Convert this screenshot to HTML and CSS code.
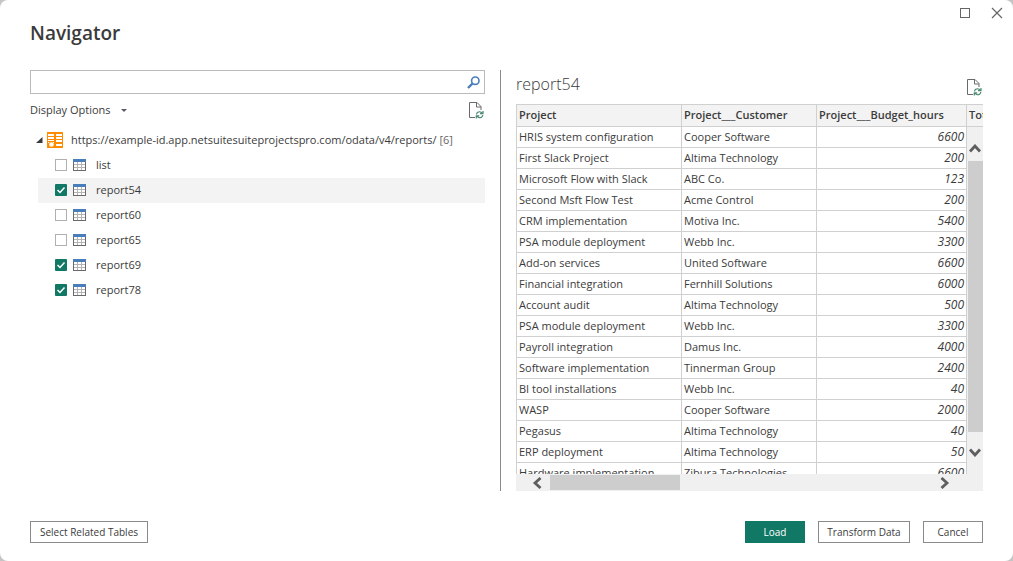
FILE: index.html
```html
<!DOCTYPE html>
<html lang="en">
<head>
    <meta charset="UTF-8">
    <meta name="viewport" content="width=device-width, initial-scale=1.0">
    <title>Navigator</title>
    <link rel="stylesheet" href="styles.css">
</head>
<body>
    <!-- Shared icons -->
    <svg class="icon-defs" width="0" height="0" aria-hidden="true">
        <symbol id="icon-table" viewBox="0 0 13 12">
            <rect x="0" y="0" width="13" height="12" fill="#6a6a6a"/>
            <rect x="1" y="3" width="11" height="8" fill="#b4b4b4"/>
            <path fill="#fff" d="M1 3h3v2H1zM5 3h3v2H5zM9 3h3v2H9zM1 6h3v2H1zM5 6h3v2H5zM9 6h3v2H9zM1 9h3v2H1zM5 9h3v2H5zM9 9h3v2H9z"/>
            <rect x="0" y="0" width="13" height="3" fill="#4a7ebb"/>
        </symbol>
        <symbol id="icon-refresh" viewBox="0 0 15 17">
            <path d="M6 15.5H.5V.5h7.500l4 4V8M7.500.5v4.500H12" fill="none" stroke="#6a6a6a"/>
            <path d="M7.500 12.500c.3-2 2-3 3.500-2.700 1 .1 1.700.6 2.200 1.400M14 9v2.700h-3M13.800 13c-.3 2-2 3-3.500 2.700-1-.1-1.700-.6-2.200-1.400M7.300 16.500v-2.700h3" fill="none" stroke="#4c8a72" stroke-width="1.200"/>
        </symbol>
    </svg>

    <div class="dialog">
        <header class="titlebar">
            <h1>Navigator</h1>
            <div class="window-controls">
                <button type="button" aria-label="Maximize">
                    <svg width="12" height="12" viewBox="0 0 12 12"><rect x="1.500" y="1.500" width="9" height="9" fill="none" stroke="#666"/></svg>
                </button>
                <button type="button" aria-label="Close">
                    <svg width="12" height="12" viewBox="0 0 12 12"><path d="M1 1l10 10M11 1L1 11" stroke="#666" stroke-width="1.200"/></svg>
                </button>
            </div>
        </header>

        <main class="content">
            <section class="sources">
                <div class="search">
                    <input type="text" aria-label="Search">
                    <button type="button" aria-label="Search">
                        <svg width="13" height="13" viewBox="0 0 13 13"><circle cx="8.300" cy="4.700" r="3.700" fill="none" stroke="#4a7ebb" stroke-width="1.600"/><path d="M5.500 7.500L1 12" stroke="#4a7ebb" stroke-width="2.400"/></svg>
                    </button>
                </div>
                <div class="toolbar">
                    <button type="button" class="display-options">Display Options
                        <svg width="6" height="3" viewBox="0 0 6 3"><path d="M0 0h6L3 3z" fill="#5a5a66"/></svg>
                    </button>
                    <button type="button" class="refresh" aria-label="Refresh">
                        <svg width="15" height="17"><use href="#icon-refresh"/></svg>
                    </button>
                </div>
                <div class="root">
                    <svg width="7" height="6" viewBox="0 0 7 6"><path d="M6.500 0v6H0z" fill="#3b3b3b"/></svg>
                    <svg width="16" height="16" viewBox="0 0 16 16">
                        <rect width="16" height="16" fill="#ff8c00"/>
                        <path fill="#fff" d="M1 2h6v2H1zM9 2h6v2H9zM1 5h6v2H1zM9 5h6v2H9zM1 8h6v1H1zM9 8h6v2H9zM9 12h6v2H9zM1 10h1v1H1zM6 10h1v1H6z"/>
                        <circle cx="4.500" cy="12.500" r="2.300" fill="#fff"/>
                    </svg>
                    <span>https://example-id.app.netsuitesuiteprojectspro.com/odata/v4/reports/ <span class="count">[6]</span></span>
                </div>
                <ul class="tree">
                    <li><label><input type="checkbox"><svg width="13" height="12"><use href="#icon-table"/></svg>list</label></li>
                    <li class="selected"><label><input type="checkbox" checked><svg width="13" height="12"><use href="#icon-table"/></svg>report54</label></li>
                    <li><label><input type="checkbox"><svg width="13" height="12"><use href="#icon-table"/></svg>report60</label></li>
                    <li><label><input type="checkbox"><svg width="13" height="12"><use href="#icon-table"/></svg>report65</label></li>
                    <li><label><input type="checkbox" checked><svg width="13" height="12"><use href="#icon-table"/></svg>report69</label></li>
                    <li><label><input type="checkbox" checked><svg width="13" height="12"><use href="#icon-table"/></svg>report78</label></li>
                </ul>
            </section>

            <section class="preview">
                <div class="preview-header">
                    <h2>report54</h2>
                    <button type="button" class="refresh" aria-label="Refresh preview">
                        <svg width="15" height="17"><use href="#icon-refresh"/></svg>
                    </button>
                </div>
                <div class="grid">
                    <div class="grid-view">
                        <table>
                            <thead>
                                <tr><th class="col-project">Project</th><th class="col-customer">Project___Customer</th><th class="col-hours">Project___Budget_hours</th><th class="col-total">Total</th></tr>
                            </thead>
                            <tbody>
                                <tr><td>HRIS system configuration</td><td>Cooper Software</td><td class="num">6600</td><td></td></tr>
                                <tr><td>First Slack Project</td><td>Altima Technology</td><td class="num">200</td><td></td></tr>
                                <tr><td>Microsoft Flow with Slack</td><td>ABC Co.</td><td class="num">123</td><td></td></tr>
                                <tr><td>Second Msft Flow Test</td><td>Acme Control</td><td class="num">200</td><td></td></tr>
                                <tr><td>CRM implementation</td><td>Motiva Inc.</td><td class="num">5400</td><td></td></tr>
                                <tr><td>PSA module deployment</td><td>Webb Inc.</td><td class="num">3300</td><td></td></tr>
                                <tr><td>Add-on services</td><td>United Software</td><td class="num">6600</td><td></td></tr>
                                <tr><td>Financial integration</td><td>Fernhill Solutions</td><td class="num">6000</td><td></td></tr>
                                <tr><td>Account audit</td><td>Altima Technology</td><td class="num">500</td><td></td></tr>
                                <tr><td>PSA module deployment</td><td>Webb Inc.</td><td class="num">3300</td><td></td></tr>
                                <tr><td>Payroll integration</td><td>Damus Inc.</td><td class="num">4000</td><td></td></tr>
                                <tr><td>Software implementation</td><td>Tinnerman Group</td><td class="num">2400</td><td></td></tr>
                                <tr><td>BI tool installations</td><td>Webb Inc.</td><td class="num">40</td><td></td></tr>
                                <tr><td>WASP</td><td>Cooper Software</td><td class="num">2000</td><td></td></tr>
                                <tr><td>Pegasus</td><td>Altima Technology</td><td class="num">40</td><td></td></tr>
                                <tr><td>ERP deployment</td><td>Altima Technology</td><td class="num">50</td><td></td></tr>
                                <tr><td>Hardware implementation</td><td>Zibura Technologies</td><td class="num">6600</td><td></td></tr>
                            </tbody>
                        </table>
                        <div class="scroll-y">
                            <svg width="12" height="9" viewBox="0 0 12 9"><path d="M1 7.500l5-5.500 5 5.500" fill="none" stroke="#5e5e5e" stroke-width="2.800"/></svg>
                            <div class="thumb"></div>
                            <svg width="12" height="9" viewBox="0 0 12 9"><path d="M1 1.500l5 5.500 5-5.500" fill="none" stroke="#5e5e5e" stroke-width="2.800"/></svg>
                        </div>
                    </div>
                    <div class="scroll-x">
                        <svg width="10" height="12" viewBox="0 0 10 12"><path d="M8.500 1l-5.500 5 5.500 5" fill="none" stroke="#5e5e5e" stroke-width="2.800"/></svg>
                        <div class="track"><div class="thumb"></div></div>
                        <svg width="10" height="12" viewBox="0 0 10 12"><path d="M1.500 1l5.500 5-5.500 5" fill="none" stroke="#5e5e5e" stroke-width="2.800"/></svg>
                    </div>
                </div>
            </section>
        </main>

        <footer class="actions">
            <button type="button" class="btn btn-related">Select Related Tables</button>
            <button type="button" class="btn btn-primary">Load</button>
            <button type="button" class="btn btn-transform">Transform Data</button>
            <button type="button" class="btn">Cancel</button>
        </footer>
    </div>
</body>
</html>
```
FILE: styles.css
```css
* {
    box-sizing: border-box;
}

body {
    margin: 0;
    background-color: #c4c4c4;
    color: #3b3b3b;
    font-family: "Open Sans", "Noto Sans", sans-serif;
    font-size: 11px;
    line-height: 16px;
}

button {
    padding: 0;
    border: none;
    background: none;
    color: inherit;
    font: inherit;
    cursor: pointer;
}

svg {
    display: block;
    flex: none;
}

.icon-defs {
    position: absolute;
}

.dialog {
    display: flex;
    flex-direction: column;
    height: 100vh;
    min-height: 400px;
    padding: 0 30px 18px;
    background-color: #fff;
    border-radius: 8px;
}

/* Title bar */
.titlebar {
    display: flex;
    justify-content: space-between;
    align-items: flex-start;
    height: 70px;
    margin-right: -20px;
}

h1 {
    margin: 20px 0 0;
    font-size: 19px;
    font-weight: 600;
    line-height: 26px;
}

.window-controls {
    display: flex;
    gap: 20px;
    padding-top: 7px;
}

/* Two panes split by a rule */
.content {
    display: flex;
    flex: 1;
    min-height: 0;
}

.sources {
    flex: 455 1 0;
    min-width: 0;
    margin-right: 15px;
}

.preview {
    display: flex;
    flex: 467 1 0;
    flex-direction: column;
    min-width: 0;
    padding-left: 15px;
    border-left: 1px solid #8a8a8a;
}

/* Source list */
.search {
    display: flex;
    align-items: center;
    height: 24px;
    padding-right: 4px;
    border: 1px solid #bababa;
}

.search input {
    flex: 1;
    min-width: 0;
    height: 22px;
    padding: 0 4px;
    border: none;
    outline: none;
    font: inherit;
}

.toolbar {
    display: flex;
    justify-content: space-between;
    align-items: center;
    height: 34px;
    padding: 0 1px 2px 0;
}

.display-options {
    display: flex;
    align-items: center;
    gap: 10px;
}

.root {
    display: flex;
    align-items: center;
    height: 25px;
    padding: 0 0 1px 6px;
    white-space: nowrap;
}

.root svg + svg {
    margin: 0 8px 0 4px;
}

.count {
    color: #666;
}

.tree {
    margin: 0;
    padding: 0 0 0 8px;
    list-style: none;
}

.tree label {
    display: flex;
    align-items: center;
    height: 25px;
    padding: 0 0 1px 17px;
}

.tree svg {
    margin: 0 10px 0 6px;
}

.tree .selected {
    background-color: #f3f3f3;
}

.tree input {
    appearance: none;
    width: 12px;
    height: 12px;
    margin: 0;
    border: 1px solid #b0b0b0;
    background-color: #fff;
}

.tree input:checked {
    border: none;
    border-radius: 1px;
    background: #117865 url("data:image/svg+xml,%3Csvg xmlns='http://www.w3.org/2000/svg' viewBox='0 0 12 12'%3E%3Cpath d='M2.500 6l2.500 2.500 4.500-5' fill='none' stroke='white' stroke-width='1.500'/%3E%3C/svg%3E") center / 12px 12px no-repeat;
}

/* Preview */
.preview-header {
    display: flex;
    justify-content: space-between;
    align-items: flex-end;
    height: 34px;
    padding: 0 1px 8px 0;
}

h2 {
    margin: 0;
    font-size: 16px;
    font-weight: 300;
    line-height: 24px;
}

.grid {
    display: flex;
    flex: 1;
    flex-direction: column;
    min-height: 0;
}

.grid-view {
    position: relative;
    flex: 1;
    min-height: 0;
    overflow: hidden;
}

table {
    width: 601px;
    border-collapse: separate;
    border-spacing: 0;
    border-top: 1px solid #d0d0d0;
    border-left: 1px solid #d0d0d0;
    table-layout: fixed;
}

th,
td {
    height: 21px;
    padding: 0 2px;
    border-right: 1px solid #d0d0d0;
    border-bottom: 1px solid #d0d0d0;
    text-align: left;
    white-space: nowrap;
}

th {
    height: 22px;
    padding-bottom: 2px;
    background-color: #f3f3f3;
    font-weight: 600;
}

.col-project {
    width: 165px;
}

.col-customer {
    width: 135px;
}

.col-hours {
    width: 150px;
}

.num {
    font-size: 12px;
    font-style: italic;
    text-align: right;
}

/* Scroll bars */
.scroll-y {
    position: absolute;
    top: 23px;
    right: 0;
    bottom: 0;
    display: flex;
    flex-direction: column;
    align-items: center;
    gap: 8px;
    width: 16px;
    padding: 17px 0;
    background-color: #f0f0f0;
}

.thumb {
    background-color: #cdcdcd;
}

.scroll-y .thumb {
    flex: 1;
    width: 15px;
    margin-bottom: 8px;
}

.scroll-x {
    display: flex;
    align-items: center;
    gap: 8px;
    height: 17px;
    padding: 0 33px 0 16px;
    background-color: #f0f0f0;
}

.track {
    flex: 1;
}

.scroll-x .thumb {
    width: 34%;
    height: 15px;
}

/* Bottom buttons */
.actions {
    display: flex;
    gap: 13px;
    margin-top: 30px;
}

.btn {
    min-width: 60px;
    height: 22px;
    border: 1px solid #8a8a8a;
    font-size: 10px;
}

.btn-related {
    min-width: 118px;
    margin-right: auto;
}

.btn-primary {
    border-color: #117865;
    background-color: #117865;
    color: #fff;
}

.btn-transform {
    min-width: 92px;
}
```
